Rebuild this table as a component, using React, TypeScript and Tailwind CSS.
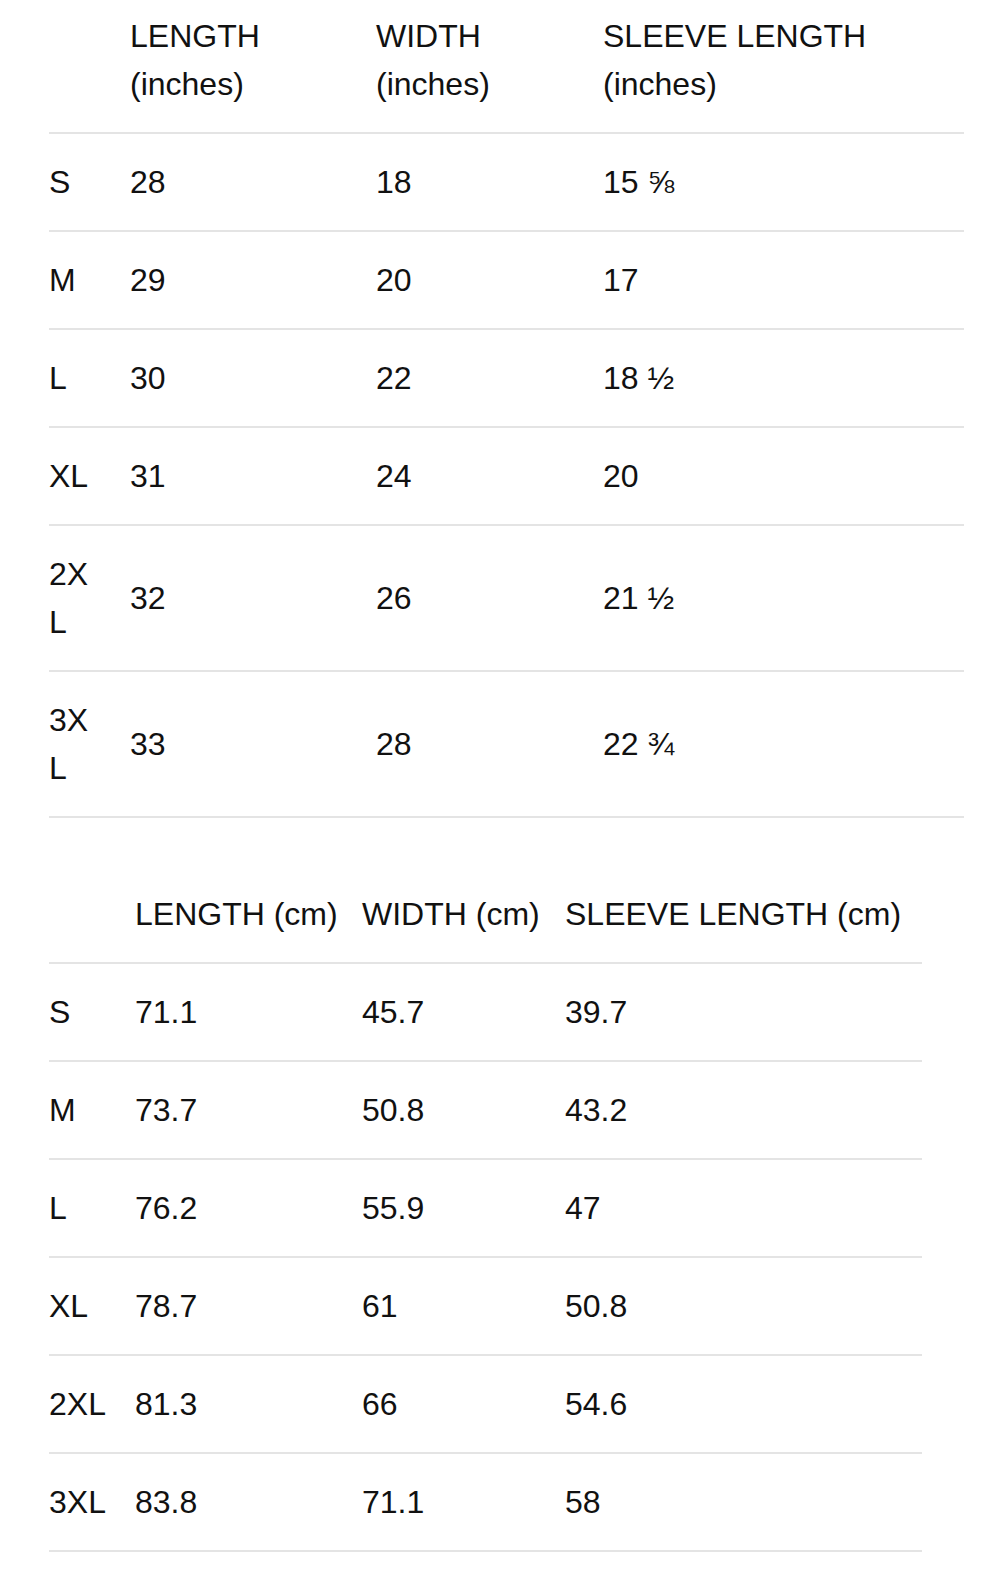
import React from "react";

const inchRows: [string, string, string, React.ReactNode][] = [
  ["S", "28", "18", <>15 <span>⅝</span></>],
  ["M", "29", "20", "17"],
  ["L", "30", "22", <>18 <span>½</span></>],
  ["XL", "31", "24", "20"],
  ["2XL", "32", "26", <>21 <span>½</span></>],
  ["3XL", "33", "28", <>22 <span>¾</span></>],
];

const cmRows: [string, string, string, string][] = [
  ["S", "71.1", "45.7", "39.7"],
  ["M", "73.7", "50.8", "43.2"],
  ["L", "76.2", "55.9", "47"],
  ["XL", "78.7", "61", "50.8"],
  ["2XL", "81.3", "66", "54.6"],
  ["3XL", "83.8", "71.1", "58"],
];

export default function App() {
  return (
    <div
      className="bg-white text-[#111111] px-[49px] pt-[12px] min-h-[1572px]"
      style={{ fontFamily: '"Liberation Sans", Arial, sans-serif' }}
    >
      <table className="table-fixed w-[915px] border-collapse text-[32px] leading-[48px]">
        <colgroup>
          <col className="w-[81px]" />
          <col className="w-[246px]" />
          <col className="w-[227px]" />
          <col />
        </colgroup>
        <thead>
          <tr className="border-b-2 border-[#e4e4e4]">
            <th className="pb-[24px] font-normal text-left align-middle"></th>
            <th className="pb-[24px] font-normal text-left align-middle pr-4">LENGTH<br />(inches)</th>
            <th className="pb-[24px] font-normal text-left align-middle pr-4">WIDTH<br />(inches)</th>
            <th className="pb-[24px] font-normal text-left align-middle pr-4">SLEEVE LENGTH<br />(inches)</th>
          </tr>
        </thead>
        <tbody>
          {inchRows.map((r, i) => (
            <tr key={i} className="border-b-2 border-[#e4e4e4]">
              <td className="py-[24px] pr-[36px] align-middle break-all">{r[0]}</td>
              <td className="py-[24px] pr-4 align-middle">{r[1]}</td>
              <td className="py-[24px] pr-4 align-middle">{r[2]}</td>
              <td className="py-[24px] pr-4 align-middle">{r[3]}</td>
            </tr>
          ))}
        </tbody>
      </table>

      <table className="mt-[48px] table-fixed w-[873px] border-collapse text-[32px] leading-[48px]">
        <colgroup>
          <col className="w-[86px]" />
          <col className="w-[227px]" />
          <col className="w-[203px]" />
          <col />
        </colgroup>
        <thead>
          <tr className="border-b-2 border-[#e4e4e4]">
            <th className="py-[24px] font-normal text-left"></th>
            <th className="py-[24px] font-normal text-left whitespace-nowrap">LENGTH (cm)</th>
            <th className="py-[24px] font-normal text-left whitespace-nowrap">WIDTH (cm)</th>
            <th className="py-[24px] font-normal text-left whitespace-nowrap">SLEEVE LENGTH (cm)</th>
          </tr>
        </thead>
        <tbody>
          {cmRows.map((r, i) => (
            <tr key={i} className="border-b-2 border-[#e4e4e4]">
              <td className="py-[24px] align-middle">{r[0]}</td>
              <td className="py-[24px] align-middle">{r[1]}</td>
              <td className="py-[24px] align-middle">{r[2]}</td>
              <td className="py-[24px] align-middle">{r[3]}</td>
            </tr>
          ))}
        </tbody>
      </table>
    </div>
  );
}
